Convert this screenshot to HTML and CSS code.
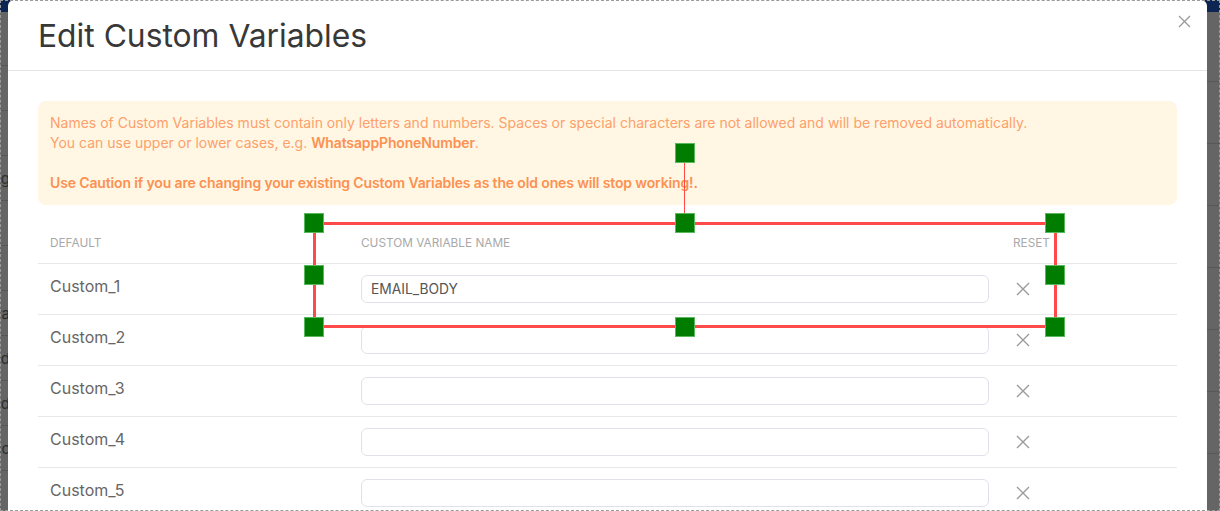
FILE: index.html
```html
<!DOCTYPE html>
<html>
<head>
    <title>Edit Custom Variables</title>
    <link rel="stylesheet" href="styles.css">
</head>
<body>

    <div class="page">
        <div class="topbar"></div>
        <div class="pageBody">
            <div class="side">
                <div class="sideRow"></div>
                <div class="sideRow"></div>
                <div class="sideRow"></div>
                <div class="sideRow">Config</div>
                <div class="sideRow"></div>
                <div class="sideRow"></div>
                <div class="sideRow">Extra</div>
                <div class="sideRow">Field</div>
                <div class="sideRow">Id</div>
                <div class="sideRow">Sync</div>
            </div>
            <div class="main">
                <div class="mainRow"></div>
                <div class="mainRow"></div>
                <div class="mainRow"></div>
                <div class="mainRow"></div>
                <div class="mainRow"></div>
                <div class="mainRow"></div>
                <div class="mainRow"></div>
            </div>
        </div>
    </div>

    <div class="modal">
        <div class="modalHeader">
            <h2 class="modalTitle">Edit Custom Variables</h2>
            <button class="closeBtn">
                <svg width="13" height="13" viewBox="0 0 13 13"><path d="M1 1L12 12M12 1L1 12" stroke="#9a9a9a" stroke-width="1.3" fill="none"/></svg>
            </button>
        </div>

        <div class="modalBody">
            <div class="alert">
                Names of Custom Variables must contain only letters and numbers. Spaces or special characters are not allowed and will be removed automatically.<br>
                You can use upper or lower cases, e.g. <b>WhatsappPhoneNumber</b>.<br>
                <br>
                <b>Use Caution if you are changing your existing Custom Variables as the old ones will stop working!.</b>
            </div>

            <table class="varTable">
                <thead>
                    <tr>
                        <th class="colDefault">Default</th>
                        <th class="colName">Custom Variable Name</th>
                        <th class="colReset">Reset</th>
                    </tr>
                </thead>
                <tbody>
                    <tr>
                        <td class="varLabel">Custom_1</td>
                        <td><input class="varInput" type="text" value="EMAIL_BODY"></td>
                        <td><button class="resetBtn"><svg width="14" height="14" viewBox="0 0 14 14"><path d="M1 1L13 13M13 1L1 13" stroke="#9a9a9a" stroke-width="1.4" fill="none"/></svg></button></td>
                    </tr>
                    <tr>
                        <td class="varLabel">Custom_2</td>
                        <td><input class="varInput" type="text" value=""></td>
                        <td><button class="resetBtn"><svg width="14" height="14" viewBox="0 0 14 14"><path d="M1 1L13 13M13 1L1 13" stroke="#9a9a9a" stroke-width="1.4" fill="none"/></svg></button></td>
                    </tr>
                    <tr>
                        <td class="varLabel">Custom_3</td>
                        <td><input class="varInput" type="text" value=""></td>
                        <td><button class="resetBtn"><svg width="14" height="14" viewBox="0 0 14 14"><path d="M1 1L13 13M13 1L1 13" stroke="#9a9a9a" stroke-width="1.4" fill="none"/></svg></button></td>
                    </tr>
                    <tr>
                        <td class="varLabel">Custom_4</td>
                        <td><input class="varInput" type="text" value=""></td>
                        <td><button class="resetBtn"><svg width="14" height="14" viewBox="0 0 14 14"><path d="M1 1L13 13M13 1L1 13" stroke="#9a9a9a" stroke-width="1.4" fill="none"/></svg></button></td>
                    </tr>
                    <tr>
                        <td class="varLabel">Custom_5</td>
                        <td><input class="varInput" type="text" value=""></td>
                        <td><button class="resetBtn"><svg width="14" height="14" viewBox="0 0 14 14"><path d="M1 1L13 13M13 1L1 13" stroke="#9a9a9a" stroke-width="1.4" fill="none"/></svg></button></td>
                    </tr>
                </tbody>
            </table>
        </div>
    </div>

    <!-- editor selection box drawn over the modal -->
    <div class="selection">
        <div class="rotateLine"></div>
        <div class="handle h-rotate"></div>
        <div class="handle h-tl"></div>
        <div class="handle h-tc"></div>
        <div class="handle h-tr"></div>
        <div class="handle h-ml"></div>
        <div class="handle h-mr"></div>
        <div class="handle h-bl"></div>
        <div class="handle h-bc"></div>
        <div class="handle h-br"></div>
    </div>

    <div class="frame"></div>

</body>
</html>
```

FILE: styles.css
```css
body{
    margin: 0;
    width: 1220px;
    height: 511px;
    overflow: hidden;
    background: #656565;
    font-family: "Inter", "Noto Sans", sans-serif;
    position: relative;
}

/* dimmed page behind the modal */
.page{
    height: 511px;
}

.topbar{
    height: 12px;
    background: #0c2552;
}

.pageBody{
    display: flex;
}

.side{
    width: 300px;
    padding-top: 1px;
}

.sideRow{
    display: flex;
    justify-content: flex-end;
    align-items: center;
    height: 44px;
    border-bottom: 1px solid #575757;
    font-size: 15px;
    color: #2e2e2e;
    padding-right: 290px;
    white-space: nowrap;
    overflow: hidden;
}

.sideRow:first-child{
    height: 52px;
}

.main{
    flex: 1;
    padding-top: 8px;
}

.mainRow{
    height: 61px;
    border-bottom: 1px solid #575757;
}

/* modal */
.modal{
    position: absolute;
    top: 0;
    left: 8px;
    width: 1199px;
    height: 540px;
    background: #fff;
    border-radius: 6px 6px 0 0;
}

.modalHeader{
    display: flex;
    justify-content: space-between;
    align-items: flex-start;
    height: 70px;
    padding: 0 16px 0 30px;
    border-bottom: 1px solid #e4e4e4;
}

.modalTitle{
    margin: 0;
    font-size: 31.8px;
    font-weight: 400;
    line-height: 72px;
    color: #383838;
}

.closeBtn{
    margin-top: 15px;
    padding: 0;
    border: none;
    background: none;
    line-height: 0;
    cursor: pointer;
}

.modalBody{
    padding: 30px 30px 0 30px;
}

.alert{
    background: #fff7e4;
    border-radius: 8px;
    padding: 12px 12px;
    font-size: 14px;
    line-height: 20px;
    color: #fda06b;
}

.alert b{
    font-weight: 600;
    letter-spacing: -0.14px;
    color: #fc9152;
}

.varTable{
    width: 100%;
    margin-top: 18px;
    border-collapse: collapse;
}

.varTable th{
    height: 40px;
    padding: 0 12px;
    text-align: left;
    font-size: 11.8px;
    font-weight: 400;
    text-transform: uppercase;
    color: #a9a9a9;
    border-bottom: 1px solid #e8e8ec;
}

.colDefault{
    width: 287px;
}

.colName{
    width: 628px;
}

.varTable td{
    height: 50px;
    padding: 0 12px;
    font-size: 16px;
    color: #666;
    border-bottom: 1px solid #e8e8ec;
}

.varTable td.varLabel{
    height: 44px;
    padding-bottom: 6px;
}

.varInput{
    display: block;
    width: 100%;
    height: 28px;
    box-sizing: border-box;
    padding: 0 9px;
    border: 1px solid #e1e1ec;
    border-radius: 6px;
    font-family: "Inter", "Noto Sans", sans-serif;
    font-size: 13.8px;
    color: #555;
    outline: none;
}

.resetBtn{
    display: block;
    margin-left: 3px;
    padding: 0;
    border: none;
    background: none;
    line-height: 0;
    cursor: pointer;
}

/* selection overlay */
.selection{
    position: absolute;
    left: 313px;
    top: 222px;
    width: 744px;
    height: 106px;
    box-sizing: border-box;
    border: 3px solid #ff4a4a;
}

.rotateLine{
    position: absolute;
    left: 368px;
    top: -62px;
    width: 1px;
    height: 60px;
    background: #ff4a4a;
}

.handle{
    position: absolute;
    width: 20px;
    height: 20px;
    box-sizing: border-box;
    background: #007d00;
    border: 1px solid #5cb85c;
}

.h-rotate{ left: 359px; top: -82px; }
.h-tl{ left: -12px; top: -12px; }
.h-tc{ left: 359px; top: -12px; }
.h-tr{ left: 729px; top: -12px; }
.h-ml{ left: -12px; top: 40px; }
.h-mr{ left: 729px; top: 40px; }
.h-bl{ left: -12px; top: 92px; }
.h-bc{ left: 359px; top: 92px; }
.h-br{ left: 729px; top: 92px; }

.frame{
    position: absolute;
    inset: 0;
    border: 1px dashed #9a9a9a;
    pointer-events: none;
}
```
